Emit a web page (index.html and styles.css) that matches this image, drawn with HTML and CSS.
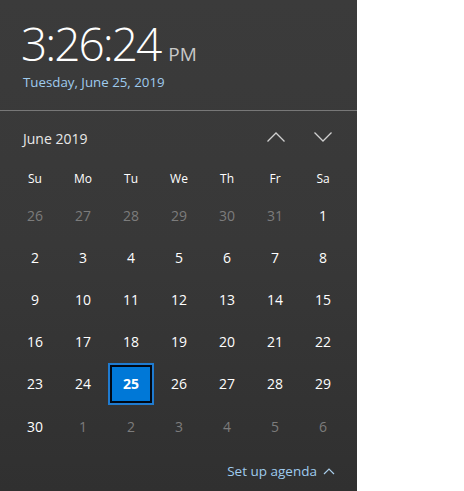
FILE: index.html
```html
<!DOCTYPE html>
<html>
<head>
<meta charset="utf-8">
<link rel="stylesheet" href="styles.css">
</head>
<body>
<div class="panel">
  <div class="clock">
    <div class="time"><span class="hms">3:26:24</span><span class="ampm">PM</span></div>
    <div class="date">Tuesday, June 25, 2019</div>
  </div>
  <div class="divider"></div>
  <div class="cal">
    <div class="cal-head">
      <div class="month">June 2019</div>
      <div class="navs">
        <svg class="chev" width="20" height="12" viewBox="0 0 20 12"><path d="M1.5 10.5 L10 2 L18.5 10.5" fill="none" stroke="#d0d0d0" stroke-width="1.3"/></svg>
        <svg class="chev" width="20" height="12" viewBox="0 0 20 12"><path d="M1.5 1.5 L10 10 L18.5 1.5" fill="none" stroke="#d0d0d0" stroke-width="1.3"/></svg>
      </div>
    </div>
    <div class="grid">
      <div class="dow">Su</div><div class="dow">Mo</div><div class="dow">Tu</div><div class="dow">We</div><div class="dow">Th</div><div class="dow">Fr</div><div class="dow">Sa</div>
      <div class="d o">26</div><div class="d o">27</div><div class="d o">28</div><div class="d o">29</div><div class="d o">30</div><div class="d o">31</div><div class="d">1</div>
      <div class="d">2</div><div class="d">3</div><div class="d">4</div><div class="d">5</div><div class="d">6</div><div class="d">7</div><div class="d">8</div>
      <div class="d">9</div><div class="d">10</div><div class="d">11</div><div class="d">12</div><div class="d">13</div><div class="d">14</div><div class="d">15</div>
      <div class="d">16</div><div class="d">17</div><div class="d">18</div><div class="d">19</div><div class="d">20</div><div class="d">21</div><div class="d">22</div>
      <div class="d">23</div><div class="d">24</div><div class="d today"><span class="sel">25</span></div><div class="d">26</div><div class="d">27</div><div class="d">28</div><div class="d">29</div>
      <div class="d">30</div><div class="d o">1</div><div class="d o">2</div><div class="d o">3</div><div class="d o">4</div><div class="d o">5</div><div class="d o">6</div>
    </div>
  </div>
  <div class="agenda">
    <span class="agenda-link">Set up agenda</span>
    <svg class="agenda-chev" width="12" height="8" viewBox="0 0 12 8"><path d="M1 7 L6 2 L11 7" fill="none" stroke="#a9cdea" stroke-width="1.2"/></svg>
  </div>
</div>
</body>
</html>
```

FILE: styles.css
```css
html, body {
  margin: 0;
  padding: 0;
  background: #ffffff;
}
body {
  font-family: "Open Sans", "Noto Sans", sans-serif;
}
.panel {
  width: 357px;
  height: 491px;
  background: linear-gradient(180deg, #3b3b3b 0%, #383838 50%, #303030 100%);
  display: flex;
  flex-direction: column;
  box-sizing: border-box;
}
.clock {
  padding: 18px 0 0 21px;
  height: 96px;
  box-sizing: border-box;
}
.time {
  display: flex;
  align-items: baseline;
  color: #ffffff;
  height: 50px;
}
.hms {
  font-size: 46px;
  font-weight: 300;
  line-height: 50px;
  letter-spacing: -2px;
}
.ampm {
  font-size: 19px;
  font-weight: 400;
  color: #c8c8c8;
  margin-left: 8px;
}
.date {
  color: #9fcbee;
  font-size: 13.3px;
  line-height: 18px;
  margin-top: 5px;
  margin-left: 2px;
}
.divider {
  height: 1px;
  background: #777777;
  margin-top: 14px;
}
.cal {
  padding: 0 10px 0 11px;
}
.cal-head {
  display: flex;
  justify-content: space-between;
  align-items: center;
  height: 53px;
  padding-left: 12px;
  padding-right: 14px;
}
.month {
  color: #e8e8e8;
  font-size: 14px;
  margin-top: 1px;
}
.navs {
  display: flex;
  gap: 27px;
  margin-top: -2px;
}
.chev {
  display: block;
}
.grid {
  display: grid;
  grid-template-columns: repeat(7, 48px);
  grid-template-rows: 30px;
  grid-auto-rows: 42.2px;
}
.dow {
  color: #ffffff;
  font-size: 12px;
  display: flex;
  justify-content: center;
  align-items: center;
  height: 28px;
  align-self: start;
}
.d {
  color: #ffffff;
  font-size: 14px;
  display: flex;
  justify-content: center;
  align-items: center;
}
.d.o {
  color: #7c7c7c;
}
.sel {
  width: 46px;
  height: 42px;
  box-sizing: border-box;
  border: 2px solid #1f7bd0;
  display: flex;
  justify-content: center;
  align-items: center;
  background: #0078d7;
  box-shadow: inset 0 0 0 2px #000814;
  font-weight: 700;
  color: #ffffff;
}
.agenda {
  margin-top: auto;
  display: flex;
  justify-content: flex-end;
  align-items: center;
  padding: 0 22px 11px 0;
  gap: 6px;
}
.agenda-link {
  color: #9fcbee;
  font-size: 13.5px;
}
.agenda-chev {
  display: block;
}
```
